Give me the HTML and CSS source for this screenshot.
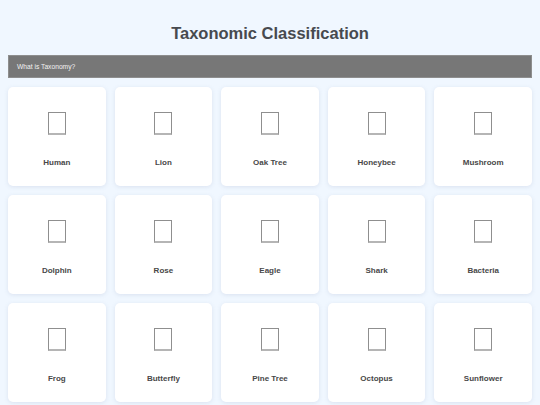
FILE: index.html
```html
<!DOCTYPE html>
<html lang="en">
<head>
    <meta charset="UTF-8">
    <meta name="viewport" content="width=device-width, initial-scale=1.0">
    <title>Taxonomic Classification</title>
    <link rel="stylesheet" href="styles.css">
</head>
<body>

    <div class="container">
        <!-- Header -->
        <h1 class="title">Taxonomic Classification</h1>

        <button class="info-btn">What is Taxonomy?</button>

        <!-- Organism Grid -->
        <div class="grid">
            <div class="card"><div class="icon"></div><span class="name">Human</span></div>
            <div class="card"><div class="icon"></div><span class="name">Lion</span></div>
            <div class="card"><div class="icon"></div><span class="name">Oak Tree</span></div>
            <div class="card"><div class="icon"></div><span class="name">Honeybee</span></div>
            <div class="card"><div class="icon"></div><span class="name">Mushroom</span></div>

            <div class="card"><div class="icon"></div><span class="name">Dolphin</span></div>
            <div class="card"><div class="icon"></div><span class="name">Rose</span></div>
            <div class="card"><div class="icon"></div><span class="name">Eagle</span></div>
            <div class="card"><div class="icon"></div><span class="name">Shark</span></div>
            <div class="card"><div class="icon"></div><span class="name">Bacteria</span></div>

            <div class="card"><div class="icon"></div><span class="name">Frog</span></div>
            <div class="card"><div class="icon"></div><span class="name">Butterfly</span></div>
            <div class="card"><div class="icon"></div><span class="name">Pine Tree</span></div>
            <div class="card"><div class="icon"></div><span class="name">Octopus</span></div>
            <div class="card"><div class="icon"></div><span class="name">Sunflower</span></div>
        </div>
    </div>

</body>
</html>
```

FILE: styles.css
```css
/* General */
body { font-family: "Liberation Sans", Arial, sans-serif; background-color: #f0f7ff; margin: 0; padding: 8px; }
.container { display: flex; flex-direction: column; }

/* Header */
.title { text-align: center; color: #474a4f; font-size: 16.5px; line-height: 20px; margin: 15px 0 12px; }

/* Info button */
.info-btn { display: block; width: 100%; height: 23px; padding: 0 8px; text-align: left; font-family: inherit; font-size: 6.7px; color: #f2f2f2; background-color: #777; border: 1px solid #8e8e8e; border-radius: 0; }

/* Grid */
.grid { display: grid; grid-template-columns: repeat(5, 1fr); gap: 9px; margin-top: 9px; }
.card { height: 99px; box-sizing: border-box; padding-top: 25px; background-color: white; border-radius: 5px; box-shadow: 0 1px 4px rgba(120, 140, 170, 0.18); display: flex; flex-direction: column; align-items: center; }
.icon { width: 16px; height: 20px; border: 1px solid #8f8f8f; border-bottom: 2px solid #b5b5b5; }
.name { margin-top: 23px; font-size: 8px; line-height: 10px; font-weight: bold; color: #484848; }
```
